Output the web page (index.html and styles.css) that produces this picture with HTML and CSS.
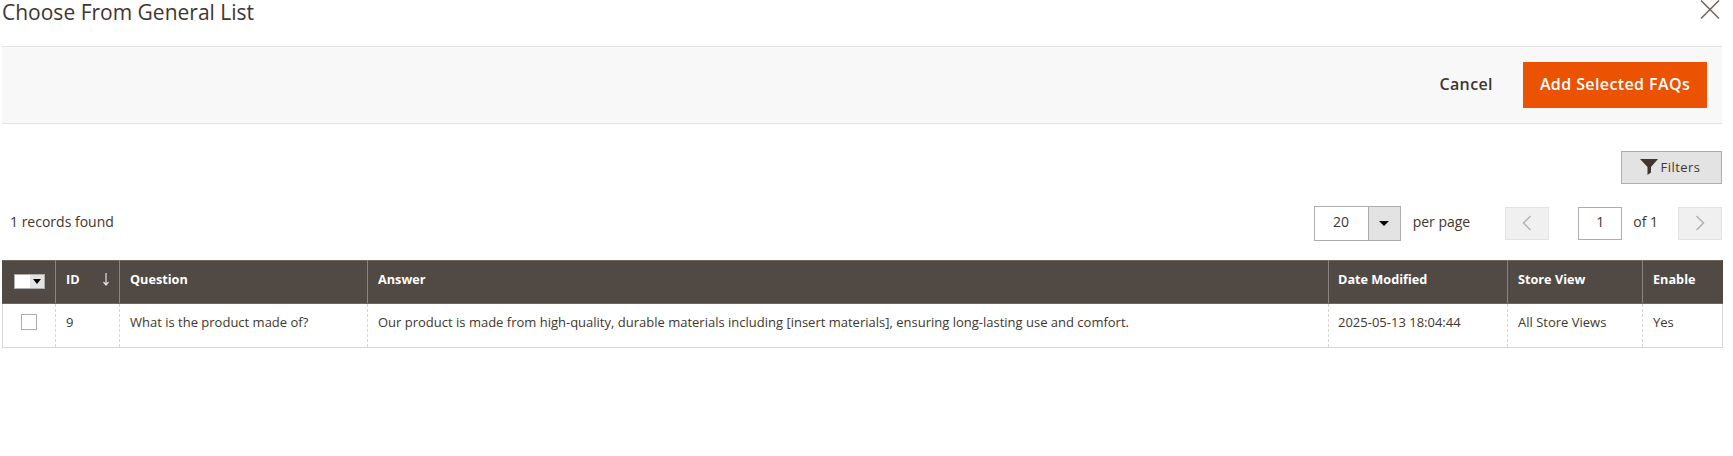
FILE: index.html
```html
<!DOCTYPE html>
<html lang="en">
<head>
<meta charset="utf-8">
<title>Choose From General List</title>
<link rel="stylesheet" href="styles.css">
</head>
<body>
<header class="modal-head">
  <h1 class="title">Choose From General List</h1>
  <button class="close" aria-label="Close">
    <svg width="20" height="20" viewBox="0 0 20 20"><path d="M1 0.5 L19 18.5 M19 0.5 L1 18.5" stroke="#736963" stroke-width="1.6" fill="none"/></svg>
  </button>
</header>
<div class="actions">
  <button class="cancel">Cancel</button>
  <button class="primary">Add Selected FAQs</button>
</div>
<div class="filter-row">
  <button class="filters">
    <svg width="18" height="16" viewBox="0 0 18 16"><path d="M0 0 H18 L11 8 V13.5 L7.5 16 V8 Z" fill="#41362f"/></svg>
    Filters
  </button>
</div>
<div class="pager-row">
  <div class="found">1 records found</div>
  <div class="pager">
    <div class="select"><span class="select-value">20</span><span class="select-arrow"><i class="caret"></i></span></div>
    <span class="per-page">per page</span>
    <button class="page-btn prev"><svg width="10" height="16" viewBox="0 0 10 16"><path d="M8.5 1 L1.5 8 L8.5 15" stroke="#b5b1ad" stroke-width="1.5" fill="none"/></svg></button>
    <div class="page-input">1</div>
    <span class="of">of 1</span>
    <button class="page-btn"><svg width="10" height="16" viewBox="0 0 10 16"><path d="M1.5 1 L8.5 8 L1.5 15" stroke="#b5b1ad" stroke-width="1.5" fill="none"/></svg></button>
  </div>
</div>
<table class="grid">
  <colgroup>
    <col class="c1"><col class="c2"><col class="c3"><col class="c4"><col class="c5"><col class="c6"><col class="c7">
  </colgroup>
  <thead>
    <tr>
      <th class="check-head"><span class="mass"><span class="mass-box"></span><span class="mass-arrow"><i class="caret small"></i></span></span></th>
      <th class="id-head">ID<svg class="sort" width="8" height="13" viewBox="0 0 8 13"><path d="M4 0 V11.5 M1.5 9 L4 12 L6.5 9" stroke="#e3e0de" stroke-width="1.2" fill="none"/></svg></th>
      <th>Question</th>
      <th>Answer</th>
      <th class="date-col">Date Modified</th>
      <th>Store View</th>
      <th>Enable</th>
    </tr>
  </thead>
  <tbody>
    <tr>
      <td class="check-cell"><span class="checkbox"></span></td>
      <td>9</td>
      <td>What is the product made of?</td>
      <td>Our product is made from high-quality, durable materials including [insert materials], ensuring long-lasting use and comfort.</td>
      <td class="date-col">2025-05-13 18:04:44</td>
      <td>All Store Views</td>
      <td>Yes</td>
    </tr>
  </tbody>
</table>
</body>
</html>
```
FILE: styles.css
```css
* { box-sizing: border-box; }
html, body { margin: 0; background: #fff; }
body {
  width: 1733px;
  height: 456px;
  overflow: hidden;
  padding: 0 11px 0 2px;
  font-family: "Open Sans", sans-serif;
  color: #41362f;
  font-size: 13px;
}
button { font-family: inherit; cursor: pointer; }
.modal-head {
  height: 46px;
  display: flex;
  justify-content: space-between;
  align-items: flex-start;
}
.title {
  margin: 0;
  font-size: 21px;
  font-weight: 400;
  line-height: 24px;
  color: #41362f;
}
.close {
  border: 0;
  background: none;
  padding: 0;
  margin-right: 2px;
  width: 20px;
  height: 20px;
  display: block;
}
.close svg { display: block; }
.actions {
  height: 78px;
  background: #f8f8f8;
  border-top: 1px solid #e3e3e3;
  border-bottom: 1px solid #e3e3e3;
  display: flex;
  justify-content: flex-end;
  align-items: center;
  padding-right: 15px;
}
.cancel {
  border: 0;
  background: none;
  padding: 0 0 2px;
  margin-right: 30px;
  font-size: 16px;
  font-weight: 600;
  letter-spacing: 0.4px;
  color: #41362f;
}
.primary {
  width: 184px;
  height: 46px;
  border: 0;
  background: #eb5202;
  color: #fff;
  font-size: 16px;
  font-weight: 600;
  letter-spacing: 0.4px;
  padding: 0 0 2px;
}
.filter-row {
  display: flex;
  justify-content: flex-end;
  padding-top: 27px;
}
.filters {
  width: 101px;
  height: 33px;
  background: #e3e3e3;
  border: 1px solid #adadad;
  color: #41362f;
  font-size: 13px;
  font-weight: 400;
  letter-spacing: 0.45px;
  display: flex;
  align-items: center;
  justify-content: center;
  gap: 3px;
  padding: 0 3px 2px 0;
}
.pager-row {
  display: flex;
  justify-content: space-between;
  align-items: center;
  height: 36px;
  margin-top: 21px;
}
.found { padding-bottom: 4px; padding-left: 8px; font-size: 14px; }
.pager { display: flex; align-items: center; font-size: 14px; }
.select {
  width: 87px;
  height: 35px;
  border: 1px solid #adadad;
  display: flex;
}
.select-value { flex: 1; text-align: center; line-height: 30px; }
.select-arrow {
  width: 32px;
  background: #e3e3e3;
  border-left: 1px solid #adadad;
  display: flex;
  align-items: center;
  justify-content: center;
}
.caret {
  display: block;
  width: 0;
  height: 0;
  border-left: 5px solid transparent;
  border-right: 5px solid transparent;
  border-top: 5px solid #000;
}
.caret.small { border-left-width: 4.5px; border-right-width: 4.5px; }
.per-page { margin-left: 12px; margin-right: 35px; padding-bottom: 4px; }
.page-btn {
  width: 44px;
  height: 33px;
  background: #f0f0f0;
  border: 1px solid #e3e3e3;
  padding: 0 0 1px;
  display: flex;
  align-items: center;
  justify-content: center;
}
.page-input {
  width: 44px;
  height: 33px;
  margin-left: 29px;
  border: 1px solid #adadad;
  text-align: center;
  line-height: 28px;
}
.of { margin-left: 11px; margin-right: 20px; padding-bottom: 4px; }
.grid {
  width: 1720px;
  margin-top: 19px;
  border-collapse: collapse;
  table-layout: fixed;
  font-size: 13px;
}
.c1 { width: 53px; }
.c2 { width: 64px; }
.c3 { width: 248px; }
.c4 { width: 961px; }
.c5 { width: 179px; }
.c6 { width: 135px; }
.c7 { width: 80px; }
th {
  height: 43px;
  background: #514943;
  color: #fff;
  text-align: left;
  font-weight: 700;
  font-size: 12.7px;
  padding: 0 10px 6px;
  border: 1px solid #8a837e;
  border-top-color: #6e6660;
  border-bottom-color: #6e6660;
}
th:first-child { border-left-color: #514943; }
th:last-child { border-right-color: #514943; }
td {
  height: 44px;
  padding: 0 10px 8px;
  color: #41362f;
  border-left: 1px dashed #d6d6d6;
  border-right: 1px dashed #d6d6d6;
  border-bottom: 1px solid #d6d6d6;
}
td:first-child { border-left: 1px solid #d6d6d6; }
td:last-child { border-right: 1px solid #d6d6d6; }
th.date-col, td.date-col { padding-left: 9px; }
.check-head { padding: 0 0 4px; text-align: center; }
.check-cell { padding: 0 0 9px; text-align: center; }
.mass {
  display: inline-flex;
  vertical-align: middle;
  width: 31px;
  height: 15px;
  border: 1px solid #adadad;
}
.mass-box { width: 15px; background: #fff; }
.mass-arrow {
  flex: 1;
  background: #e3e3e3;
  display: flex;
  align-items: center;
  justify-content: center;
}
.id-head { position: relative; }
.sort { position: absolute; right: 9px; top: 12px; }
.checkbox {
  display: inline-block;
  vertical-align: middle;
  width: 16px;
  height: 16px;
  border: 1px solid #adadad;
  background: #fff;
}
```
